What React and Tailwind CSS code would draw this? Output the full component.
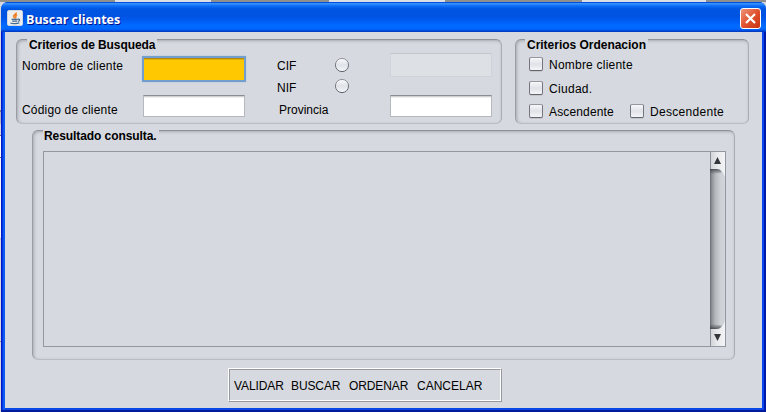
const panel =
  "rounded-[6px] border border-t-[#8f9399] border-l-[#9a9ea4] border-r-[#a9adb2] border-b-[#b9bcc1] shadow-[inset_1px_1px_3px_rgba(70,75,85,0.32)]";
const legend =
  "bg-[#d6d9df] font-bold leading-[12px] h-3 -mt-px whitespace-nowrap";
const field =
  "border border-[#b5b8bd] border-t-[#8a8e94] bg-white shadow-[inset_0_1px_0_#cfd1d4,inset_0_2px_0_#f0f0f1]";

function JavaIcon() {
  return (
    <svg className="ml-[3px] mt-[8px] shrink-0" width="16" height="16" viewBox="0 0 16 16">
      <rect x="0.5" y="0.5" width="15" height="15" rx="1.500" fill="#eceded" stroke="#cfd6dc" />
      <path d="M9.300 2.500C10 4 6 4.800 6.600 6.400C6.900 7.100 7.600 7.400 7.500 8.300M10.200 4.700C8.300 5.400 8.300 6 8.900 6.700C9.200 7.200 8.700 7.800 8.300 8.400" fill="none" stroke="#ef7d1f" strokeWidth="1.500" />
      <path d="M4.600 9.300h6M5.200 11.100h5M3.300 13c2.200.9 7 .9 9-.2M10.800 9.300c2.500-.6 2.300 1.600.2 2" fill="none" stroke="#43698f" strokeWidth="1.200" />
    </svg>
  );
}

function CloseButton() {
  return (
    <div className="mt-[6px] ml-auto mr-[3px] flex h-[21px] w-[21px] items-center justify-center rounded-[3px] border border-white bg-linear-to-br from-[#ec9378] via-[#e1522f] to-[#c8320c]">
      <svg width="13" height="13" viewBox="0 0 13 13">
        <path d="M2 2L11 11M11 2L2 11" stroke="#fff" strokeWidth="2.2" />
      </svg>
    </div>
  );
}

function Radio({ className }) {
  return (
    <svg className={className} width="16" height="16" viewBox="0 0 16 16">
      <defs>
        <linearGradient id="radioFill" x1="0" y1="0" x2="0" y2="1">
          <stop offset="0" stopColor="#fbfbfc" />
          <stop offset="0.5" stopColor="#dfe2e7" />
          <stop offset="1" stopColor="#f7f8fa" />
        </linearGradient>
        <linearGradient id="radioEdge" x1="0" y1="0" x2="0" y2="1">
          <stop offset="0" stopColor="#92959c" />
          <stop offset="1" stopColor="#5c606b" />
        </linearGradient>
      </defs>
      <circle cx="8" cy="8" r="6.6" fill="url(#radioFill)" stroke="url(#radioEdge)" />
    </svg>
  );
}

function Check({ label, tracking }) {
  return (
    <div className="flex h-[15px] items-start">
      <div className="h-[14px] w-[14px] shrink-0 rounded-[2px] border border-[#74777f] border-t-[#94979e] border-b-[#62656e] bg-linear-to-b from-[#f8f8fa] via-[#e0e2e7] to-[#f4f5f8] shadow-[0_1px_0_#c3c6cc]" />
      <span className={"ml-[6px] mt-px leading-[14px] whitespace-nowrap " + tracking}>{label}</span>
    </div>
  );
}

function ScrollBar() {
  return (
    <svg width="15" height="194" viewBox="0 0 15 194" className="shrink-0">
      <defs>
        <linearGradient id="track" x1="0" y1="0" x2="1" y2="0">
          <stop offset="0" stopColor="#686b70" />
          <stop offset="0.12" stopColor="#8d9095" />
          <stop offset="0.35" stopColor="#b4b7bc" />
          <stop offset="0.7" stopColor="#cdd0d5" />
          <stop offset="1" stopColor="#d2d5da" />
        </linearGradient>
        <linearGradient id="button" x1="0" y1="0" x2="1" y2="0">
          <stop offset="0" stopColor="#cfd2d6" />
          <stop offset="0.5" stopColor="#e8eaec" />
          <stop offset="1" stopColor="#f3f4f5" />
        </linearGradient>
        <linearGradient id="fadeTop" x1="0" y1="0" x2="0" y2="1">
          <stop offset="0" stopColor="#303236" stopOpacity="0.85" />
          <stop offset="1" stopColor="#505358" stopOpacity="0" />
        </linearGradient>
        <linearGradient id="fadeBottom" x1="0" y1="1" x2="0" y2="0">
          <stop offset="0" stopColor="#303236" stopOpacity="0.85" />
          <stop offset="1" stopColor="#505358" stopOpacity="0" />
        </linearGradient>
      </defs>
      <rect width="15" height="194" fill="url(#track)" />
      <path d="M0 16.500h7c3 0 4 2 5 4l-12 2z" fill="url(#fadeTop)" />
      <path d="M0 177.500h7c3 0 4-2 5-4l-12-2z" fill="url(#fadeBottom)" />
      <path d="M0 0H15V25C13 20 11 17 6.500 17H0Z" fill="url(#button)" />
      <path d="M0 194H15V169C13 174 11 177 6.500 177H0Z" fill="url(#button)" />
      <path d="M0.5 0V17M0.5 177V194" stroke="#8d9198" />
      <path d="M7.500 5L11 12H4Z" fill="#33363a" />
      <path d="M7.500 189L11 182H4Z" fill="#33363a" />
    </svg>
  );
}

export default function App() {
  return (
    <div className="flex h-[412px] w-[766px] flex-col overflow-hidden bg-[linear-gradient(to_bottom,#d6d9df_0px,#d6d9df_110px,#7c7f86_110px,#7c7f86_112px,#b5b8be_112px,#b5b8be_124px,#d6d9df_124px,#d6d9df_135px,#6c7077_135px,#6c7077_136px,#ffffff_136px,#ffffff_157px,#6c7077_157px,#6c7077_158px,#f8f8f9_158px,#f8f8f9_238px,#b9bcc1_238px,#d6d9df_240px,#d6d9df_341px,#8a8e94_341px,#8a8e94_342px,#d6d9df_342px)] font-['Liberation_Sans',Arial,sans-serif] text-[12px] text-black">
      <div className="flex h-[2px] shrink-0 bg-[#dcdfe6]">
        <div className="w-[115px] bg-[#8f908e]" />
        <div className="ml-[96px] w-[118px] bg-[#8f908e]" />
        <div className="ml-[116px] w-[137px] bg-[#8f908e]" />
        <div className="ml-[124px] w-[60px] bg-[#8f908e]" />
      </div>

      <div className="ml-px flex h-[410px] flex-col overflow-hidden rounded-t-[7px] bg-[#0846e8]">
        <div className="flex h-[30px] shrink-0 bg-[linear-gradient(to_bottom,#0050dc_0px,#0050dc_1px,#3b93ff_1px,#308cff_2px,#0a6cf5_4px,#0055e3_7px,#0053e1_14px,#005cf2_19px,#0069ff_23px,#0069ff_26px,#005cf0_28px,#0040ca_29px,#0038c0_30px)] pl-[3px]">
          <JavaIcon />
          <span className="ml-[3px] mt-[9px] font-['Open_Sans',sans-serif] text-[12.5px] leading-[18px] font-bold tracking-[-0.02px] whitespace-nowrap text-white [text-shadow:1px_1px_0_#00138c]">
            Buscar clientes
          </span>
          <CloseButton />
          <div className="w-[2px]" />
        </div>

        <div className="flex h-[380px] border-b-2 border-[#001a9c] bg-[#0846e8]">
          <div className="w-px bg-[#0019cf]" />
          <div className="w-px bg-[#0a35d8]" />
          <div className="w-[2px] bg-[#0a5af8]" />
          <div className="mb-[2px] flex h-[376px] w-[757px] flex-col bg-[#d6d9df]">
            <div className="mt-[7px] ml-[11px] flex gap-[13px]">
              <div className={"h-[85px] w-[486px] " + panel}>
                <div className={"ml-[10px] w-[130px] pl-[2px] tracking-[-0.08px] " + legend}>Criterios de Busqueda</div>
                <div className="flex">
                  <div className="ml-[5px] w-[120px] leading-[14px] whitespace-nowrap">
                    <div className="mt-[8px] tracking-[0.22px]">Nombre de cliente</div>
                    <div className="mt-[30px] tracking-[0.18px]">Código de cliente</div>
                  </div>
                  <div className="w-[104px]">
                    <div className="mt-[5px] h-[26px] border-2 border-[#739fce] bg-[#ffc800] shadow-[0_0_1px_#8db2dc,inset_0_1px_0_#b18a10,inset_0_2px_0_#e0b006]" />
                    <div className={"mt-[13px] ml-px h-[22px] w-[102px] " + field} />
                  </div>
                  <div className="ml-[31px] w-[57px] leading-[14px] whitespace-nowrap">
                    <div className="mt-[8px]">CIF</div>
                    <div className="mt-[8px]">NIF</div>
                    <div className="mt-[8px] ml-[2px]">Provincia</div>
                  </div>
                  <div className="w-[56px]">
                    <Radio className="mt-[6px] block" />
                    <Radio className="mt-[5px] block" />
                  </div>
                  <div>
                    <div className="mt-[2px] h-[24px] w-[102px] border border-[#d0d3d7] border-t-[#c3c6cb] bg-[#dde0e4]" />
                    <div className={"mt-[18px] h-[22px] w-[102px] " + field} />
                  </div>
                </div>
              </div>

              <div className={"h-[85px] w-[234px] " + panel}>
                <div className={"ml-[9px] w-[123px] pl-[2px] tracking-[-0.02px] " + legend}>Criterios Ordenacion</div>
                <div className="ml-[13px] mt-[6px]">
                  <Check label="Nombre cliente" tracking="tracking-[0.22px]" />
                  <div className="mt-[9px]">
                    <Check label="Ciudad." tracking="tracking-[0.3px]" />
                  </div>
                  <div className="mt-[8px] flex">
                    <div className="w-[101px]">
                      <Check label="Ascendente" tracking="tracking-[0.15px]" />
                    </div>
                    <Check label="Descendente" tracking="tracking-[0.3px]" />
                  </div>
                </div>
              </div>
            </div>

            <div className={"mt-[6px] ml-[27px] h-[230px] w-[703px] " + panel}>
              <div className={"ml-[10px] w-[116px] pl-[1px] tracking-[-0.08px] " + legend}>Resultado consulta.</div>
              <div className="mt-[9px] ml-[10px] flex h-[196px] w-[683px] justify-end border border-[#9297a1] bg-[#d6d9df]">
                <ScrollBar />
              </div>
            </div>

            <div className="mt-[8px] ml-[223px] h-[34px] w-[274px] border border-white border-r-[#97999f] border-b-[#97999f]">
              <div className="flex h-[32px] border border-white border-t-[#97999f] border-l-[#97999f] pt-[9px] pl-[4px] leading-[14px] whitespace-nowrap">
                <span className="w-[57px] tracking-[-0.1px]">VALIDAR</span>
                <span className="w-[58px] tracking-[-0.1px]">BUSCAR</span>
                <span className="w-[68px] tracking-[-0.1px]">ORDENAR</span>
                <span>CANCELAR</span>
              </div>
            </div>
          </div>
          <div className="w-[2px] bg-[#0846f0]" />
          <div className="w-[2px] bg-[#0019a8]" />
        </div>
      </div>
    </div>
  );
}
